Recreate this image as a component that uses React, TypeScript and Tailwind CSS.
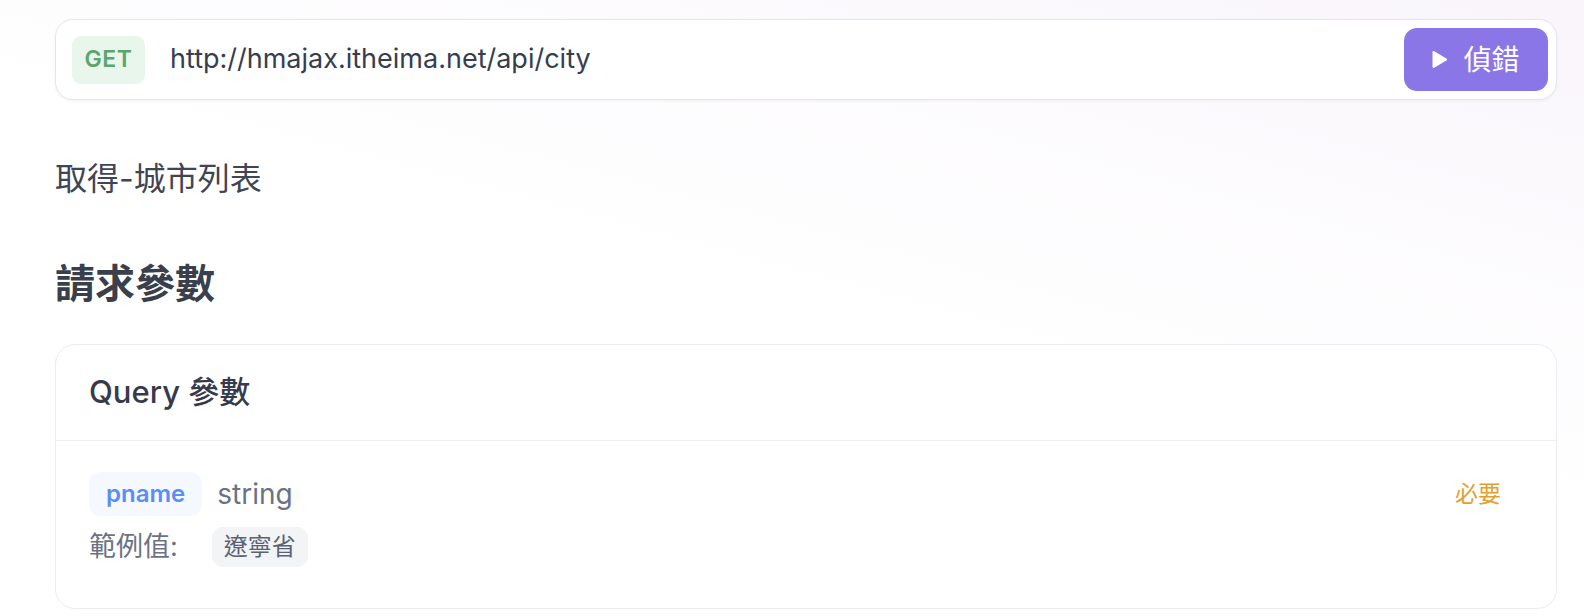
import { useState } from "react";

const font = {
  fontFamily: 'Inter, "Noto Sans CJK TC", "Noto Sans CJK SC", sans-serif',
};

const params = [
  { name: "pname", type: "string", required: true, example: "遼寧省" },
];

function PlayIcon() {
  return (
    <svg width="16" height="19" viewBox="0 0 16 19" fill="none">
      <path
        d="M2.2 1.3C1.3.8 0.5 1.3 0.5 2.3v14.4c0 1 .8 1.5 1.7 1L14.4 10.5c.9-.5.9-1.5 0-2L2.2 1.3z"
        fill="white"
      />
    </svg>
  );
}

export default function App() {
  const [url] = useState("http://hmajax.itheima.net/api/city");

  return (
    <div
      className="min-h-[616px] w-full bg-[linear-gradient(195deg,#f9f5fb_0%,#fcfafd_22%,#ffffff_50%)] pl-[55px] pr-[27px] pt-[19px]"
      style={font}
    >
      <div className="flex h-[81px] items-center rounded-[18px] border border-[#e6e6ee] bg-white pl-4 pr-2 shadow-[0_1px_3px_rgba(30,30,60,0.06)]">
        <span className="flex h-[48px] w-[73px] items-center justify-center rounded-[9px] bg-[#e8f6ec] text-[23px] font-semibold tracking-[0.5px] text-[#5aa66c]">
          GET
        </span>
        <span className="ml-[25px] flex-1 text-[27px] text-[#363d4f]">
          {url}
        </span>
        <button className="flex h-[63px] w-[144px] items-center justify-center gap-[15px] rounded-[13px] bg-[#8b76e7] text-[28px] text-white">
          <PlayIcon />
          <span>偵錯</span>
        </button>
      </div>

      <p className="mt-[56px] text-[32px] leading-[46px] text-[#3f4554]">
        取得-城市列表
      </p>

      <h2 className="mt-[54px] text-[40px] font-bold leading-[56px] text-[#3a3f4c]">
        請求參數
      </h2>

      <div className="mt-[32px] rounded-[20px] border border-[#ececf2] bg-white">
        <div className="flex h-[96px] items-center border-b border-[#ededf3] px-[33px]">
          <span className="text-[31px] font-medium text-[#353b4c]">
            Query 參數
          </span>
        </div>
        <div className="px-[33px] pb-[40px] pt-[31px]">
          {params.map((p) => (
            <div key={p.name}>
              <div className="flex items-center">
                <span className="flex h-[44px] items-center rounded-[12px] bg-[#f6f8ff] px-[17px] text-[24px] font-semibold text-[#5a8ef3]">
                  {p.name}
                </span>
                <span className="ml-[15px] text-[28px] text-[#6b7285]">
                  {p.type}
                </span>
                <span className="ml-auto mr-[22px] text-[23px] text-[#e39f2e]">
                  {p.required ? "必要" : "可選"}
                </span>
              </div>
              <div className="mt-[11px] flex items-center">
                <span className="text-[27px] text-[#6b7285]">範例值:</span>
                <span className="ml-[34px] flex h-[40px] items-center rounded-[11px] bg-[#f3f4f6] px-[12px] text-[24px] text-[#5b6272]">
                  {p.example}
                </span>
              </div>
            </div>
          ))}
        </div>
      </div>
    </div>
  );
}
